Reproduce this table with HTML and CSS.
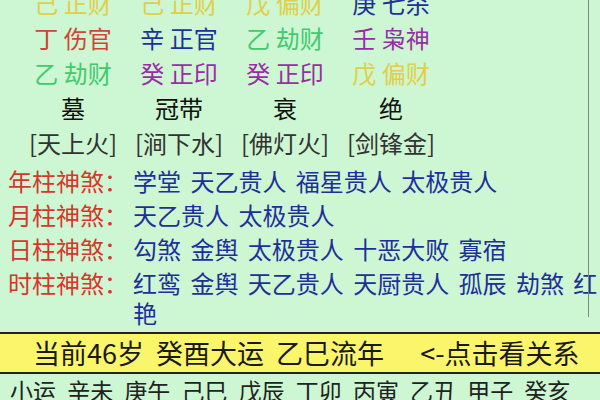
FILE: index.html
```html
<!DOCTYPE html>
<html lang="zh-CN">
<head>
<meta charset="utf-8">
<title>八字排盘</title>
<link rel="stylesheet" href="styles.css">
</head>
<body>
<div class="page">
  <div class="vline"></div>
  <div class="pillars">
    <div class="cell"><span class="c-yellow">己 正财</span></div>
    <div class="cell"><span class="c-yellow">己 正财</span></div>
    <div class="cell"><span class="c-yellow">戊 偏财</span></div>
    <div class="cell"><span class="c-blue">庚 七杀</span></div>

    <div class="cell"><span class="c-red">丁 伤官</span></div>
    <div class="cell"><span class="c-blue">辛 正官</span></div>
    <div class="cell"><span class="c-green">乙 劫财</span></div>
    <div class="cell"><span class="c-purple">壬 枭神</span></div>

    <div class="cell"><span class="c-green">乙 劫财</span></div>
    <div class="cell"><span class="c-purple">癸 正印</span></div>
    <div class="cell"><span class="c-purple">癸 正印</span></div>
    <div class="cell"><span class="c-yellow">戊 偏财</span></div>

    <div class="cell c-black">墓</div>
    <div class="cell c-black">冠带</div>
    <div class="cell c-black">衰</div>
    <div class="cell c-black">绝</div>

    <div class="cell c-gray">[天上火]</div>
    <div class="cell c-gray">[涧下水]</div>
    <div class="cell c-gray">[佛灯火]</div>
    <div class="cell c-gray">[剑锋金]</div>
  </div>

  <div class="shensha">
    <div class="ss-row"><span class="ss-label">年柱神煞：</span><span class="ss-vals">学堂 天乙贵人 福星贵人 太极贵人</span></div>
    <div class="ss-row"><span class="ss-label">月柱神煞：</span><span class="ss-vals">天乙贵人 太极贵人</span></div>
    <div class="ss-row"><span class="ss-label">日柱神煞：</span><span class="ss-vals">勾煞 金舆 太极贵人 十恶大败 寡宿</span></div>
    <div class="ss-row"><span class="ss-label">时柱神煞：</span><span class="ss-vals">红鸾 金舆 天乙贵人 天厨贵人 孤辰 劫煞 红艳</span></div>
  </div>

  <div class="bar">当前46岁 癸酉大运 乙巳流年 &nbsp; &lt;-点击看关系</div>

  <div class="xiaoyun">小运 辛未 庚午 己巳 戊辰 丁卯 丙寅 乙丑 甲子 癸亥</div>
</div>
</body>
</html>
```

FILE: styles.css
```css
html, body {
  margin: 0;
  padding: 0;
  overflow: hidden;
}
body {
  background: #cdf6d2;
  font-family: "Noto Sans CJK SC", "Noto Sans", sans-serif;
  width: 600px;
  height: 400px;
}
.page {
  position: relative;
  width: 600px;
  height: 400px;
}
.vline {
  position: absolute;
  left: 588px;
  top: 0;
  width: 1px;
  height: 332px;
  background: #7d8a80;
}
.pillars {
  display: grid;
  grid-template-columns: repeat(4, 106px);
  padding-left: 20px;
  margin-top: -15px;
  font-size: 24px;
  line-height: 35px;
  text-align: center;
  white-space: nowrap;
}
.c-yellow { color: #e0cf48; }
.c-red { color: #cf4636; }
.c-blue { color: #1e3296; }
.c-green { color: #43c96e; }
.c-purple { color: #9a2ca8; }
.c-black { color: #111; }
.c-gray { color: #333; }

.shensha {
  display: flex;
  flex-direction: column;
  gap: 4px;
  padding: 6px 0 4px 8px;
  margin-right: -14px;
  font-size: 24px;
  line-height: 30px;
}
.ss-row {
  display: grid;
  grid-template-columns: 125px 1fr;
}
.ss-label {
  color: #d6362c;
}
.ss-vals {
  color: #1f2f9a;
  word-spacing: 4px;
}
.bar {
  background: #fbf56c;
  border-top: 2px solid #222;
  border-bottom: 2px solid #222;
  height: 38px;
  line-height: 38px;
  padding-left: 33px;
  font-size: 27px;
  color: #1a1a1a;
  white-space: nowrap;
  word-spacing: 6px;
}
.xiaoyun {
  padding-left: 10px;
  font-size: 23px;
  line-height: 32px;
  color: #222;
  white-space: nowrap;
  word-spacing: 6px;
}
```
